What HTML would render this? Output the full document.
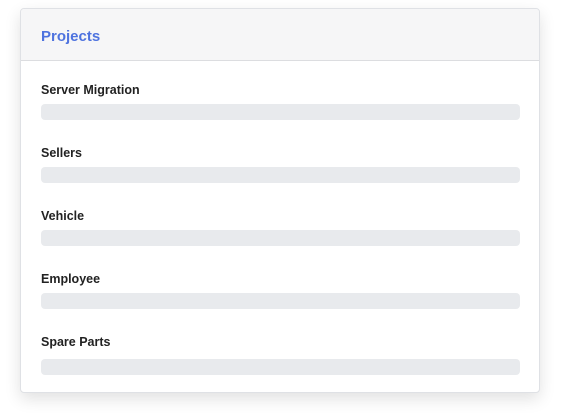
<!DOCTYPE html><html><head><style>
body{margin:0;background:#fff;font-family:"Liberation Sans",sans-serif;}
.card{position:absolute;left:20px;top:8px;width:518px;height:383px;border:1px solid #dfe1e5;border-radius:4px;box-shadow:0 6px 16px rgba(0,0,0,.12);background:#fff;overflow:hidden}
.hd{height:51px;background:#f6f6f7;border-bottom:1px solid #dcdde0;}
.hd span{position:absolute;left:20px;top:19px;font-size:15px;font-weight:bold;color:#4e73df}
.l{position:absolute;left:20px;font-size:12.5px;font-weight:bold;color:#222}
.b{position:absolute;left:20px;width:479px;height:16px;border-radius:4px;background:#e8eaed}
</style></head><body><div class="card"><div class="hd"><span>Projects</span></div>
<div class="l" style="top:74px">Server Migration</div><div class="b" style="top:95px"></div>
<div class="l" style="top:137px">Sellers</div><div class="b" style="top:158px"></div>
<div class="l" style="top:200px">Vehicle</div><div class="b" style="top:221px"></div>
<div class="l" style="top:263px">Employee</div><div class="b" style="top:284px"></div>
<div class="l" style="top:326px">Spare Parts</div><div class="b" style="top:350px"></div>
</div></body></html>
